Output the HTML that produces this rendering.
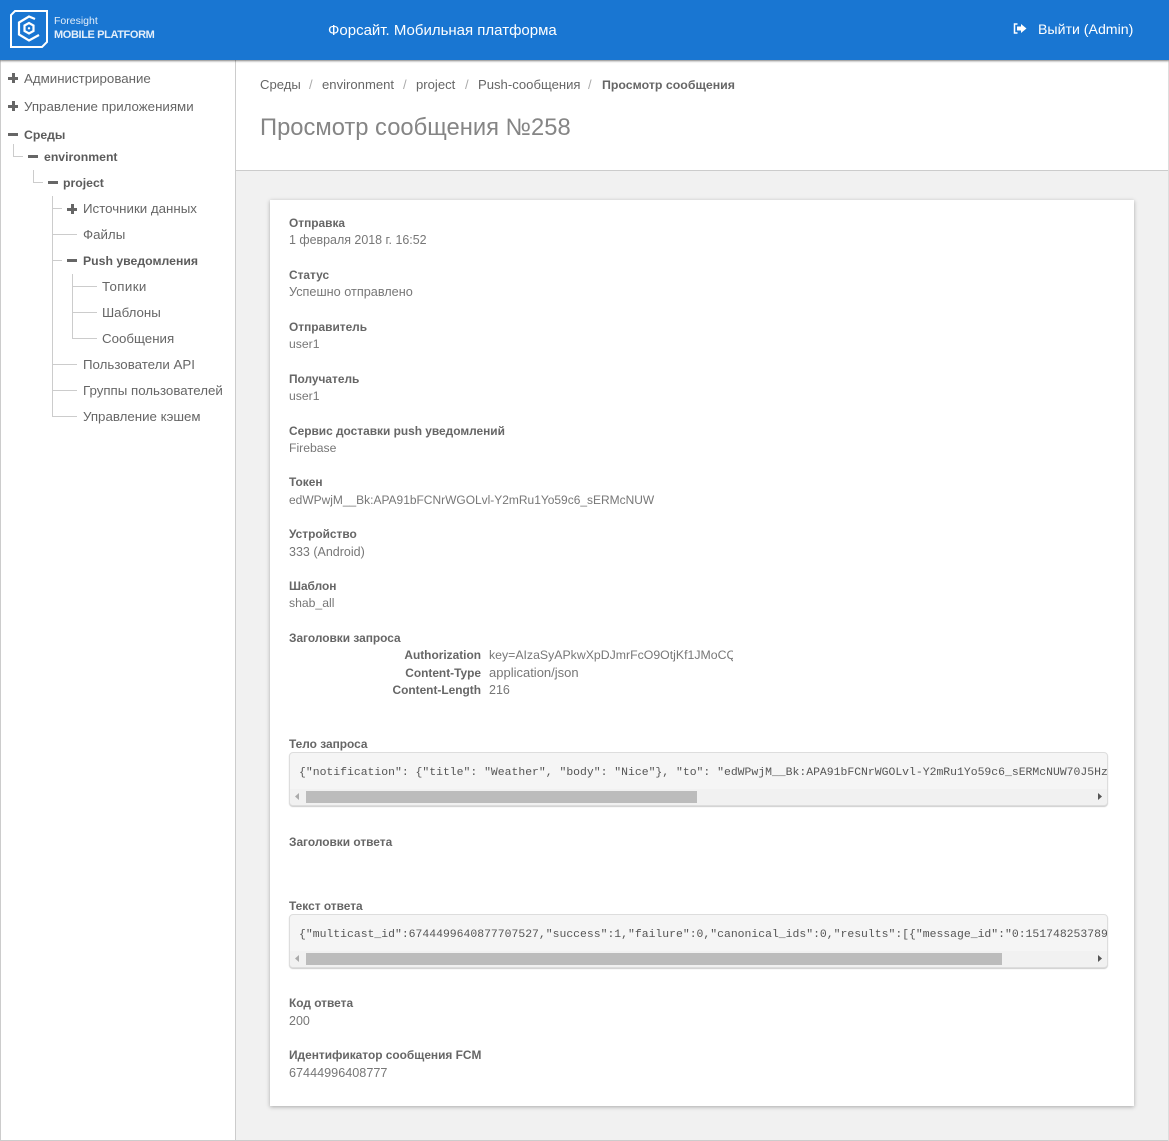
<!DOCTYPE html>
<html><head><meta charset="utf-8"><style>
*{box-sizing:border-box}
html,body{margin:0;padding:0;width:1169px;height:1141px;overflow:hidden;background:#f1f1f1;font-family:"Liberation Sans",sans-serif;color:#666;font-size:13px}
.a{position:absolute;white-space:nowrap}
.t{font-size:13.3px;line-height:16px;color:#666}
.b{font-weight:bold;color:#5c5c5c;font-size:12.25px}
.c{font-size:13.1px;line-height:16px;color:#666}
.s{font-size:13px;line-height:16px;color:#aaa}
.l{font-weight:bold;font-size:11.9px;line-height:16px;color:#666;left:289px}
.v{font-size:12.2px;line-height:16px;color:#777;left:289px}
.h{position:absolute;background:#ccc;height:1px}
.w{position:absolute;background:#ccc;width:1px}
.m{position:absolute;background:#666;height:3px;width:10px}
.pv{position:absolute;background:#666;height:10px;width:3px}
.code{position:absolute;left:289px;width:819px;height:54px;background:#f5f5f5;border:1px solid #ddd;border-radius:4px;overflow:hidden;box-shadow:0 1px 1px #ccc}
.code pre{margin:0;position:absolute;left:9px;top:12px;font:11.43px/16px "Liberation Mono",monospace;color:#555}
.bar{position:absolute;left:0;right:0;bottom:0;height:16px;background:#f1f1f1}
.th{position:absolute;left:16px;top:2px;height:12px;background:#bcbcbc}
</style></head><body>
<div class="a" style="left:0;top:60px;width:236px;height:1081px;background:#fff;border-left:1px solid #ccc;border-right:1px solid #ccc"></div>
<div class="a" style="left:236px;top:60px;width:933px;height:111px;background:#fff;border-bottom:1px solid #ccc"></div>
<div class="a" style="left:0;top:1140px;width:1169px;height:1px;background:#ccc"></div>
<div class="a" style="left:1168px;top:60px;width:1px;height:1081px;background:#ddd"></div>
<div class="a" style="left:0;top:0;width:1169px;height:60px;background:#1976d2;box-shadow:0 1px 2px rgba(0,0,0,.5)"></div>
<svg class="a" style="left:10px;top:10px" width="38" height="38" viewBox="0 0 38 38" fill="none" stroke="#fff">
<path d="M5 1H37V32L32 37H1V5Z" stroke-width="2"/>
<path d="M25 9L19 6.500L9 12.500V24.500L19 30.500L29 25" stroke-width="2.200"/>
<path d="M14.500 15.500L19 13L23.500 15.500V21L19 23.500L14.500 21Z" stroke-width="2.200"/>
<circle cx="19" cy="18.300" r="1.200" fill="#fff" stroke="none"/>
</svg>
<div class="a" style="left:54px;top:14px;color:#e3eefa;font-size:10.500px;line-height:15px">Foresight</div>
<div class="a" style="left:54px;top:27px;color:#e3eefa;font-size:11px;font-weight:bold;line-height:16px;letter-spacing:-.38px">MOBILE PLATFORM</div>
<div class="a" style="left:328px;top:22px;color:#fff;font-size:15px;line-height:18px">Форсайт. Мобильная платформа</div>
<svg class="a" style="left:1013px;top:23px" width="14" height="11" viewBox="0 0 14 11"><path d="M4.500 1H1.500V10H4.500" stroke="#fff" stroke-width="1.500" fill="none"/><path d="M4 3.500H8V1L13.500 5.500L8 10V7.500H4Z" fill="#fff"/></svg>
<div class="a" style="left:1038px;top:20px;color:#fff;font-size:14.150px;line-height:18px">Выйти (Admin)</div>

<!-- tree -->
<div class="pv" style="left:12px;top:73px"></div><div class="m" style="left:8px;top:77px"></div>
<div class="a t" style="left:24px;top:71px">Администрирование</div>
<div class="pv" style="left:12px;top:101px"></div><div class="m" style="left:8px;top:105px"></div>
<div class="a t" style="left:24px;top:99px">Управление приложениями</div>
<div class="m" style="left:8px;top:133px"></div>
<div class="a t b" style="left:24px;top:127px">Среды</div>
<div class="w" style="left:13px;top:144px;height:12px"></div><div class="h" style="left:13px;top:156px;width:10px"></div>
<div class="m" style="left:28px;top:155px"></div>
<div class="a t b" style="left:44px;top:149px">environment</div>
<div class="w" style="left:33px;top:170px;height:12px"></div><div class="h" style="left:33px;top:182px;width:10px"></div>
<div class="m" style="left:48px;top:181px"></div>
<div class="a t b" style="left:63px;top:175px">project</div>
<div class="w" style="left:52px;top:196px;height:220px"></div>
<div class="h" style="left:52px;top:208px;width:10px"></div>
<div class="pv" style="left:71px;top:204px"></div><div class="m" style="left:67px;top:208px"></div>
<div class="a t" style="left:83px;top:201px">Источники данных</div>
<div class="h" style="left:52px;top:234px;width:25px"></div>
<div class="a t" style="left:83px;top:227px">Файлы</div>
<div class="h" style="left:52px;top:260px;width:10px"></div>
<div class="m" style="left:67px;top:259px"></div>
<div class="a t b" style="left:83px;top:253px">Push уведомления</div>
<div class="w" style="left:72px;top:274px;height:64px"></div>
<div class="h" style="left:72px;top:286px;width:25px"></div>
<div class="a t" style="left:102px;top:279px;letter-spacing:.4px">Топики</div>
<div class="h" style="left:72px;top:312px;width:25px"></div>
<div class="a t" style="left:102px;top:305px">Шаблоны</div>
<div class="h" style="left:72px;top:338px;width:25px"></div>
<div class="a t" style="left:102px;top:331px">Сообщения</div>
<div class="h" style="left:52px;top:364px;width:25px"></div>
<div class="a t" style="left:83px;top:357px">Пользователи API</div>
<div class="h" style="left:52px;top:390px;width:25px"></div>
<div class="a t" style="left:83px;top:383px">Группы пользователей</div>
<div class="h" style="left:52px;top:416px;width:25px"></div>
<div class="a t" style="left:83px;top:409px">Управление кэшем</div>

<!-- header -->
<div class="a c" style="left:260px;top:77px">Среды</div>
<div class="a s" style="left:309px;top:77px">/</div>
<div class="a c" style="left:322px;top:77px">environment</div>
<div class="a s" style="left:403px;top:77px">/</div>
<div class="a c" style="left:416px;top:77px">project</div>
<div class="a s" style="left:465px;top:77px">/</div>
<div class="a c" style="left:478px;top:77px">Push-сообщения</div>
<div class="a s" style="left:588px;top:77px">/</div>
<div class="a c b" style="left:602px;top:77px;font-size:12.350px">Просмотр сообщения</div>
<div class="a" style="left:260px;top:113px;font-size:23.750px;line-height:30px;color:#858585">Просмотр сообщения №258</div>

<!-- card -->
<div class="a" style="left:270px;top:200px;width:864px;height:906px;background:#fff;box-shadow:0 1px 4px rgba(0,0,0,.3)"></div>
<div class="a l" style="top:215px">Отправка</div><div class="a v" style="top:232px;font-size:12.450px">1 февраля 2018 г. 16:52</div>
<div class="a l" style="top:267px">Статус</div><div class="a v" style="top:284px;font-size:12.700px">Успешно отправлено</div>
<div class="a l" style="top:319px">Отправитель</div><div class="a v" style="top:336px">user1</div>
<div class="a l" style="top:371px">Получатель</div><div class="a v" style="top:388px">user1</div>
<div class="a l" style="top:423px">Сервис доставки push уведомлений</div><div class="a v" style="top:440px">Firebase</div>
<div class="a l" style="top:474px">Токен</div><div class="a v" style="top:492px;font-size:11.970px">edWPwjM__Bk:APA91bFCNrWGOLvl-Y2mRu1Yo59c6_sERMcNUW</div>
<div class="a l" style="top:526px">Устройство</div><div class="a v" style="top:544px;font-size:12.500px">333 (Android)</div>
<div class="a l" style="top:578px">Шаблон</div><div class="a v" style="top:595px">shab_all</div>
<div class="a l" style="top:630px">Заголовки запроса</div>
<div class="a l" style="left:auto;right:688px;top:647px">Authorization</div>
<div class="a v" style="left:489px;top:647px;width:244px;overflow:hidden;font-size:12.300px">key=AIzaSyAPkwXpDJmrFcO9OtjKf1JMoCQ</div>
<div class="a l" style="left:auto;right:688px;top:665px">Content-Type</div>
<div class="a v" style="left:489px;top:665px;font-size:13px">application/json</div>
<div class="a l" style="left:auto;right:688px;top:682px">Content-Length</div>
<div class="a v" style="left:489px;top:682px;font-size:12.500px">216</div>
<div class="a l" style="top:736px">Тело запроса</div>
<div class="code" style="top:752px"><pre>{"notification": {"title": "Weather", "body": "Nice"}, "to": "edWPwjM__Bk:APA91bFCNrWGOLvl-Y2mRu1Yo59c6_sERMcNUW70J5Hz</pre>
<div class="bar"><div class="th" style="width:391px"></div>
<svg class="a" style="left:5px;top:4px" width="5" height="7"><path d="M4 0V7L0 3.500Z" fill="#aaa"/></svg><svg class="a" style="right:4px;top:4px" width="5" height="7"><path d="M0 0V7L4 3.500Z" fill="#555"/></svg></div></div>
<div class="a l" style="top:834px">Заголовки ответа</div>
<div class="a l" style="top:898px">Текст ответа</div>
<div class="code" style="top:914px"><pre>{"multicast_id":6744499640877707527,"success":1,"failure":0,"canonical_ids":0,"results":[{"message_id":"0:151748253789</pre>
<div class="bar"><div class="th" style="width:696px"></div>
<svg class="a" style="left:5px;top:4px" width="5" height="7"><path d="M4 0V7L0 3.500Z" fill="#aaa"/></svg><svg class="a" style="right:4px;top:4px" width="5" height="7"><path d="M0 0V7L4 3.500Z" fill="#555"/></svg></div></div>
<div class="a l" style="top:995px">Код ответа</div><div class="a v" style="top:1013px;font-size:12.500px">200</div>
<div class="a l" style="top:1047px">Идентификатор сообщения FCM</div><div class="a v" style="top:1065px;font-size:12.650px">67444996408777</div>
</body></html>
